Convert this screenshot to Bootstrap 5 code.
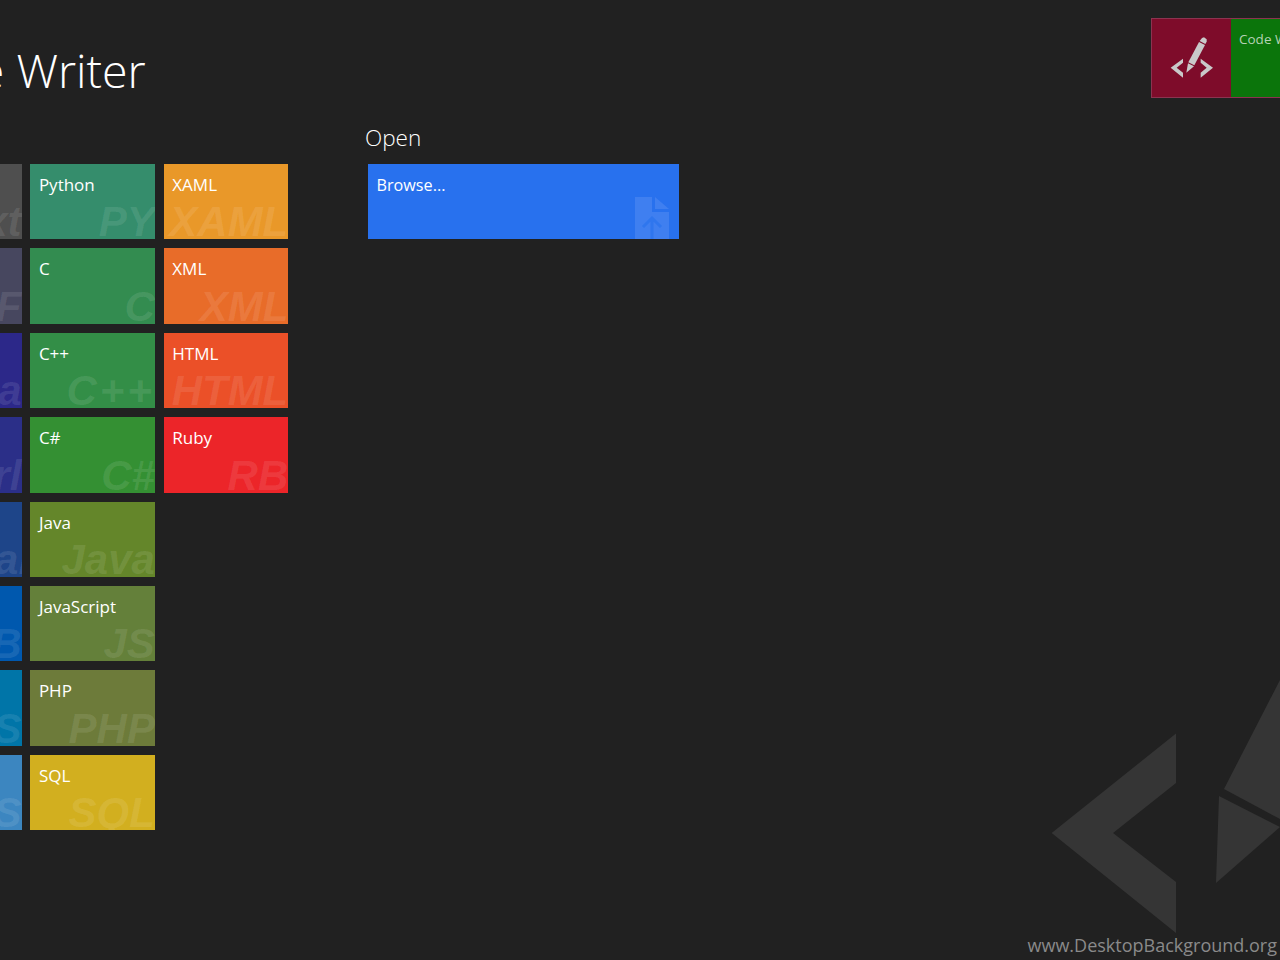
<!DOCTYPE html>
<html lang="en">
<head>
<meta charset="utf-8">
<title>Code Writer</title>
<link rel="stylesheet" href="https://cdn.jsdelivr.net/npm/bootstrap@5.3.0/dist/css/bootstrap.min.css">
<style>
html,body{height:100%}
body{background:#212121;color:#fff;font-family:"Open Sans","Noto Sans",sans-serif;width:1280px;height:960px}
.stage{width:1280px;height:960px}
.backlogo{left:0;top:0;width:1280px;height:960px}
.content-layer{z-index:1}
.top-area{height:164px}
.app-title{margin:38px 0 0 -105px;font-size:46.5px;line-height:64px;font-weight:300;white-space:nowrap}
.switch-tile{margin-top:18px;height:79.5px;width:129px;border:1px solid #8c3350;border-right:0;background:#7e0c2a}
.switch-icon{width:79px}
.switch-icon svg{width:44px;height:44px}
.switch-name{background:#0b750b;color:#b4d2b4;font-size:13.5px;line-height:18px;padding:11px 0 0 8px;white-space:nowrap;min-width:0}
.tiles-row{margin-left:-103px}
.tile-grid{display:grid;grid-template-rows:repeat(8,75.4px);grid-auto-flow:column;grid-auto-columns:124.5px;gap:9px 8.9px;width:391px}
.tile{color:#fff;height:75.4px}
.tile-label{font-size:17px;line-height:24px;padding:9px 0 0 8.5px;white-space:nowrap}
.browse-label{font-size:16.2px}
.tile-mark{font-family:"Liberation Sans",Arial,sans-serif;font-size:42px;line-height:42px;font-weight:700;font-style:italic;color:rgba(255,255,255,.1);white-space:nowrap;text-align:right;margin-bottom:-4px}
.mark-wide{letter-spacing:3px}
.open-col{width:320px;margin-left:80px;margin-top:-42px}
.open-title{font-size:22.5px;font-weight:300;line-height:32px;margin:0 0 10px -3px}
.browse-tile{width:311px;height:75.4px;background:#2871ee}
.browse-icon{width:34px;height:42px;margin:0 10px 0 auto;display:block}
.site-mark{right:3px;bottom:1px;color:#8a8a8a;font-size:18px;line-height:28px;white-space:nowrap;z-index:2}
.c-a{background:#4f4f4f}.c-b{background:#47475f}.c-c{background:#2c2889}.c-d{background:#2b2f88}
.c-e{background:#1e4589}.c-f{background:#0058ae}.c-g{background:#0075a8}.c-h{background:#3c86c0}
.c-i{background:#358d6c}.c-j{background:#338c50}.c-k{background:#338e47}.c-l{background:#349033}
.c-m{background:#64862a}.c-n{background:#64803a}.c-o{background:#6d7b3a}.c-p{background:#d2af1f}
.c-q{background:#e99829}.c-r{background:#e86c29}.c-s{background:#eb5028}.c-t{background:#ec2529}
</style>
</head>
<body class="overflow-hidden">
<div class="stage position-relative overflow-hidden">
  <svg class="backlogo position-absolute" viewBox="0 0 1280 960" aria-hidden="true">
    <polygon fill="#353535" points="1051.7,833 1176,733.5 1176,783 1113,833 1176,882 1176,933"/>
    <polygon fill="#353535" points="1224,789 1280,680 1280,819"/>
    <polygon fill="#353535" points="1219,796 1280,827 1216,883"/>
  </svg>

  <div class="content-layer position-relative">
    <header class="top-area d-flex justify-content-between align-items-start">
      <h1 class="app-title">Code Writer</h1>
      <div class="switch-tile d-flex overflow-hidden">
        <div class="switch-icon d-flex align-items-center justify-content-center flex-shrink-0">
          <svg viewBox="88 80 132 132" aria-hidden="true">
            <polygon fill="#c9c9c9" points="90,175 127,148 127,160 108,175 127,190 127,205"/>
            <polygon fill="#c9c9c9" points="217,175 180,148 180,160 198,175 180,190 180,205"/>
            <polygon fill="#c9c9c9" points="184,86 190,84 198,90 198,97 194,104 177,95"/>
            <polygon fill="#c9c9c9" points="175,98 193,107 161,168 143,159"/>
            <polygon fill="#c9c9c9" points="142,162 160,171 137,190"/>
          </svg>
        </div>
        <div class="switch-name flex-grow-1">Code Writer</div>
      </div>
    </header>

    <main class="tiles-row d-flex align-items-start">
      <div class="tile-grid">
        <div class="tile c-a d-flex flex-column justify-content-between overflow-hidden"><div class="tile-label">Text</div><div class="tile-mark">Text</div></div>
        <div class="tile c-b d-flex flex-column justify-content-between overflow-hidden"><div class="tile-label">RTF</div><div class="tile-mark">RTF</div></div>
        <div class="tile c-c d-flex flex-column justify-content-between overflow-hidden"><div class="tile-label">Lua</div><div class="tile-mark">Lua</div></div>
        <div class="tile c-d d-flex flex-column justify-content-between overflow-hidden"><div class="tile-label">Perl</div><div class="tile-mark">Perl</div></div>
        <div class="tile c-e d-flex flex-column justify-content-between overflow-hidden"><div class="tile-label">Pascal</div><div class="tile-mark">Pascal</div></div>
        <div class="tile c-f d-flex flex-column justify-content-between overflow-hidden"><div class="tile-label">VB</div><div class="tile-mark">VB</div></div>
        <div class="tile c-g d-flex flex-column justify-content-between overflow-hidden"><div class="tile-label">LESS</div><div class="tile-mark">LESS</div></div>
        <div class="tile c-h d-flex flex-column justify-content-between overflow-hidden"><div class="tile-label">CSS</div><div class="tile-mark">CSS</div></div>

        <div class="tile c-i d-flex flex-column justify-content-between overflow-hidden"><div class="tile-label">Python</div><div class="tile-mark">PY</div></div>
        <div class="tile c-j d-flex flex-column justify-content-between overflow-hidden"><div class="tile-label">C</div><div class="tile-mark">C</div></div>
        <div class="tile c-k d-flex flex-column justify-content-between overflow-hidden"><div class="tile-label">C++</div><div class="tile-mark mark-wide">C++</div></div>
        <div class="tile c-l d-flex flex-column justify-content-between overflow-hidden"><div class="tile-label">C#</div><div class="tile-mark">C#</div></div>
        <div class="tile c-m d-flex flex-column justify-content-between overflow-hidden"><div class="tile-label">Java</div><div class="tile-mark">Java</div></div>
        <div class="tile c-n d-flex flex-column justify-content-between overflow-hidden"><div class="tile-label">JavaScript</div><div class="tile-mark">JS</div></div>
        <div class="tile c-o d-flex flex-column justify-content-between overflow-hidden"><div class="tile-label">PHP</div><div class="tile-mark">PHP</div></div>
        <div class="tile c-p d-flex flex-column justify-content-between overflow-hidden"><div class="tile-label">SQL</div><div class="tile-mark">SQL</div></div>

        <div class="tile c-q d-flex flex-column justify-content-between overflow-hidden"><div class="tile-label">XAML</div><div class="tile-mark">XAML</div></div>
        <div class="tile c-r d-flex flex-column justify-content-between overflow-hidden"><div class="tile-label">XML</div><div class="tile-mark">XML</div></div>
        <div class="tile c-s d-flex flex-column justify-content-between overflow-hidden"><div class="tile-label">HTML</div><div class="tile-mark">HTML</div></div>
        <div class="tile c-t d-flex flex-column justify-content-between overflow-hidden"><div class="tile-label">Ruby</div><div class="tile-mark">RB</div></div>
      </div>

      <section class="open-col">
        <h2 class="open-title">Open</h2>
        <div class="browse-tile d-flex flex-column justify-content-between overflow-hidden">
          <div class="tile-label browse-label">Browse...</div>
          <svg class="browse-icon" viewBox="0 0 34 42" aria-hidden="true">
            <path fill="#3f7ff0" d="M0 0H17V15H34V42H0Z"/>
            <path fill="#3f7ff0" d="M20 0L34 12H20Z"/>
            <path fill="none" stroke="#2f76ee" stroke-width="3" d="M17 42V22M8 30L17 21L26 30"/>
          </svg>
        </div>
      </section>
    </main>
  </div>

  <div class="site-mark position-absolute">www.DesktopBackground.org</div>
</div>
<script src="https://cdn.jsdelivr.net/npm/bootstrap@5.3.0/dist/js/bootstrap.bundle.min.js"></script>
</body>
</html>
